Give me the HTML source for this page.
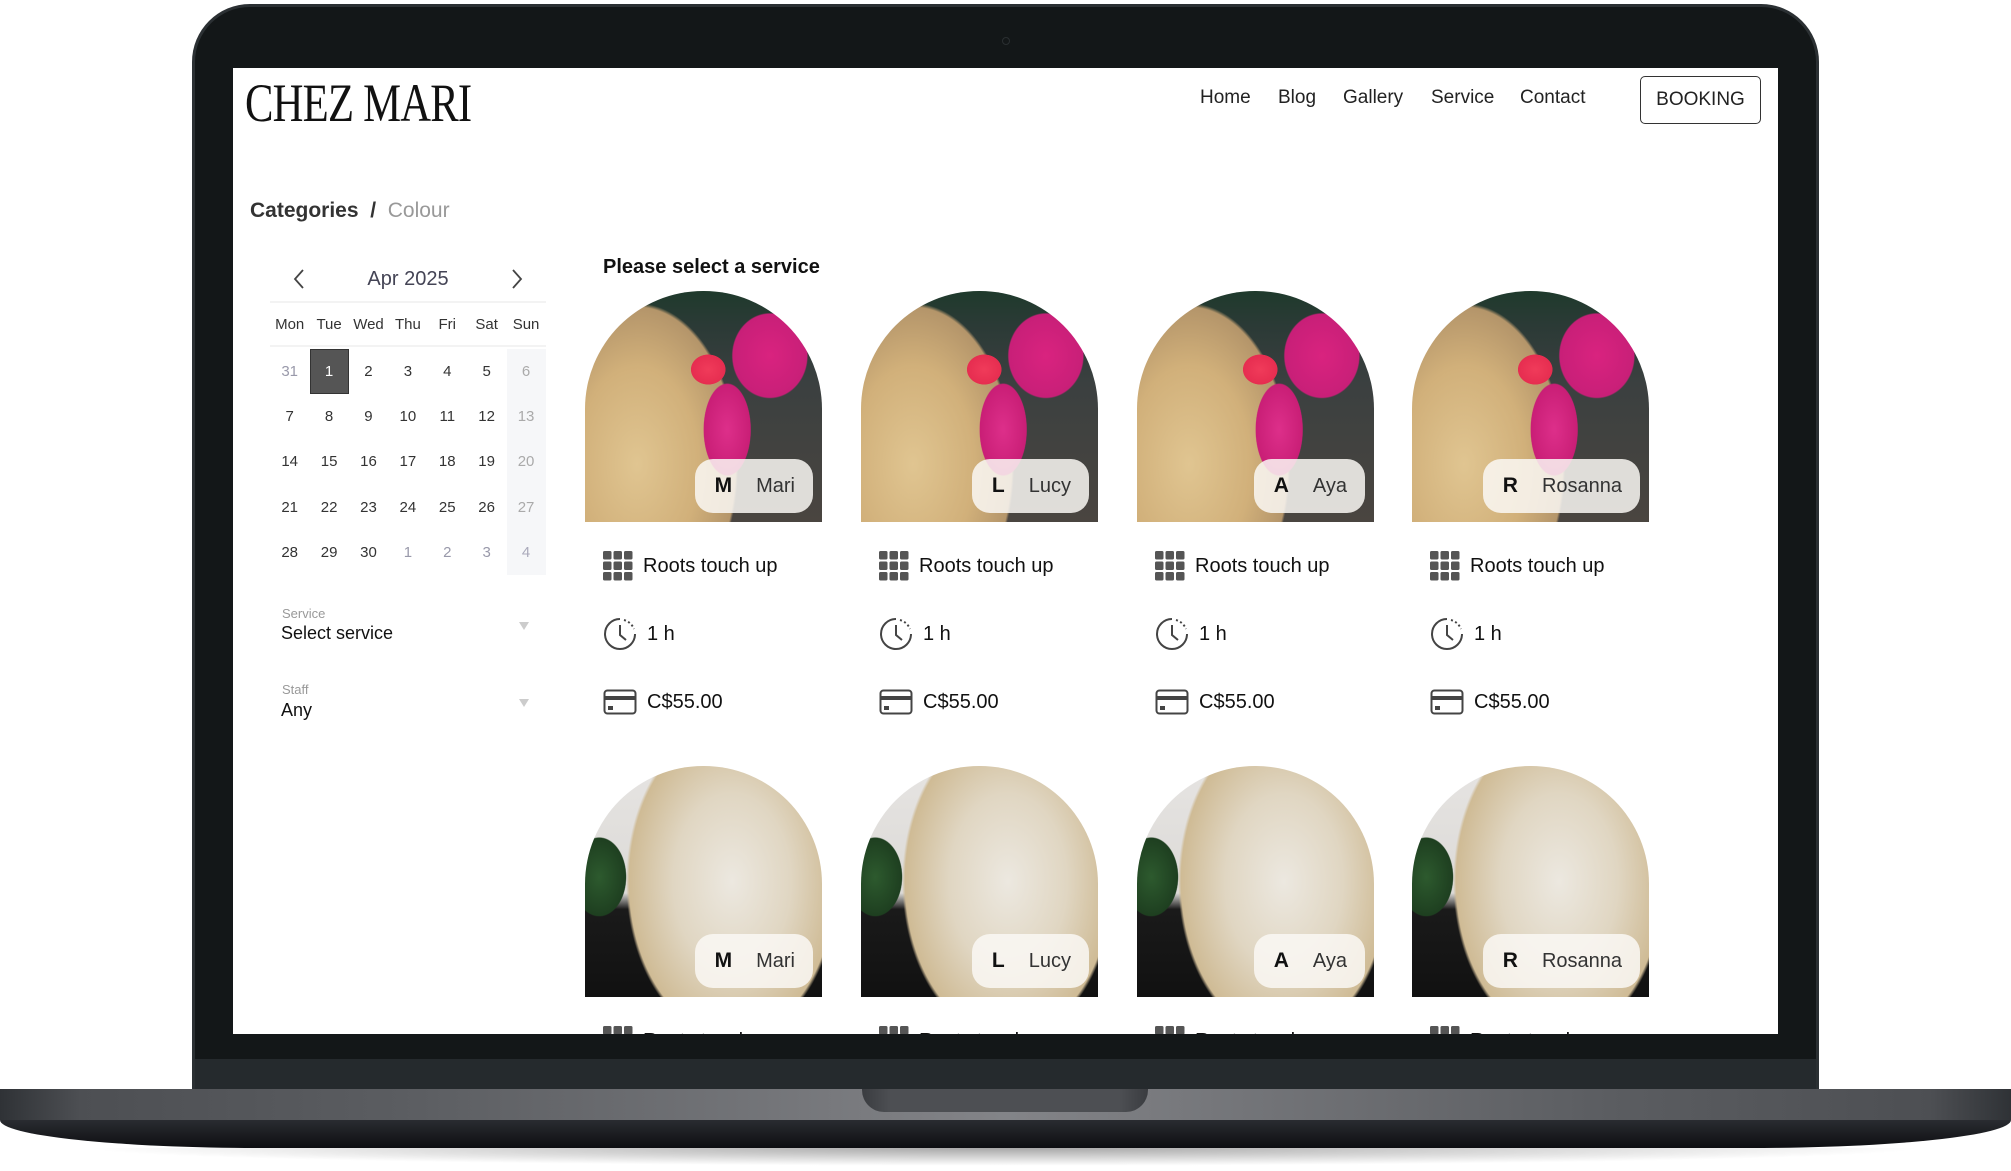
<!DOCTYPE html>
<html><head><meta charset="utf-8">
<style>
*{margin:0;padding:0;box-sizing:border-box}
body{width:2011px;height:1171px;background:#fff;position:relative;overflow:hidden;font-family:"Liberation Sans",sans-serif;color:#222}
.abs{position:absolute}
.lid{left:192px;top:4px;width:1627px;height:1100px;background:#131718;border-radius:58px 58px 0 0;border:3px solid #2b3033;border-bottom:none}
.chin{left:195px;top:1059px;width:1621px;height:31px;background:#252a2d}
.screen{left:233px;top:68px;width:1545px;height:966px;background:#fff;overflow:hidden}
.base{left:0;top:1089px;width:2011px;height:31px;background:linear-gradient(90deg,#2f3236 0%,#4d4f53 4%,#5b5d61 20%,#838488 50%,#5b5d61 80%,#4d4f53 96%,#2f3236 100%)}
.base2{left:0;top:1120px;width:2011px;height:28px;background:linear-gradient(#2a2c31,#0d0e11);border-radius:0 0 260px 260px/0 0 28px 28px}
.notch{left:862px;top:1089px;width:286px;height:23px;background:linear-gradient(90deg,#3a3c40,#4d4f53 10%,#4d4f53 90%,#3a3c40);border-radius:0 0 22px 22px}
.shadow{left:80px;top:1148px;width:1850px;height:18px;background:radial-gradient(ellipse at 50% 0,rgba(0,0,0,.35),rgba(0,0,0,0) 70%)}
.logo{left:12px;top:4px;font-family:"Liberation Serif",serif;font-size:54px;color:#111;transform:scaleX(.79);transform-origin:0 0;letter-spacing:-1px;white-space:nowrap}
.nav{top:19px;font-size:19px;color:#222}
.btn{left:1407px;top:8px;width:121px;height:48px;border:1.5px solid #333;border-radius:5px;font-size:19px;text-align:center;line-height:45px;color:#222}
.crumb{left:17px;top:131px;font-size:21px;font-weight:bold;color:#333}
.crumb span{color:#999;font-weight:normal}
.cal{left:37px;top:196px;width:276px}
.calhead{position:absolute;top:0;left:0;width:276px;text-align:center;font-size:20px;color:#445;line-height:30px}
.row{position:absolute;left:0;width:276px;display:flex}
.row div{width:39.4px;text-align:center;font-size:15px;color:#333}
.pse{left:370px;top:188px;font-size:20px;font-weight:bold;color:#111}
.card{position:absolute;width:237px;height:300px}
.img{position:absolute;left:0;top:0;width:237px;height:231px;border-radius:118px 118px 0 0;overflow:hidden}
.pill{position:absolute;right:9px;bottom:9px;height:54px;padding:0 18px 0 20px;border-radius:18px;background:rgba(250,248,245,.85);display:flex;align-items:center;font-size:20px;color:#333;white-space:nowrap}
.pill b{margin-right:24px;font-size:21px;color:#111}
.line{position:absolute;left:18px;display:flex;align-items:center;font-size:20px;color:#111;white-space:nowrap}
.line svg{margin-right:10px}
</style></head><body>
<div class="abs shadow"></div>
<div class="abs lid"></div>
<div class="abs chin"></div>
<div class="abs base"></div>
<div class="abs base2"></div>
<div class="abs notch"></div>
<div class="abs" style="left:1002px;top:37px;width:8px;height:8px;border-radius:50%;border:1px solid #2a2f31"></div>
<div class="abs screen">
 <div class="abs logo">CHEZ MARI</div>
 <div class="abs nav" style="left:967px">Home</div>
 <div class="abs nav" style="left:1045px">Blog</div>
 <div class="abs nav" style="left:1110px">Gallery</div>
 <div class="abs nav" style="left:1198px">Service</div>
 <div class="abs nav" style="left:1287px">Contact</div>
 <div class="abs btn">BOOKING</div>
 <div class="abs crumb">Categories &nbsp;/&nbsp; <span>Colour</span></div>
 <div class="abs cal">
  <div class="calhead">Apr 2025</div>
  <svg class="abs" style="left:22px;top:4px" width="14" height="22"><path d="M11 2 L3 11 L11 20" fill="none" stroke="#444" stroke-width="1.8"/></svg>
  <svg class="abs" style="left:240px;top:4px" width="14" height="22"><path d="M3 2 L11 11 L3 20" fill="none" stroke="#444" stroke-width="1.8"/></svg>
  <div class="abs" style="left:0;top:37px;width:276px;height:2px;background:#f3f3f3"></div>
  <div class="abs" style="left:0;top:81px;width:276px;height:2px;background:#f3f3f3"></div>
  <div class="abs" style="left:237px;top:85px;width:39px;height:226px;background:#f6f7f9"></div>
  <div class="abs" style="left:40px;top:85px;width:39px;height:45px;background:#555;border:1px solid #333"></div>
  <div class="row" style="top:52px"><div>Mon</div><div>Tue</div><div>Wed</div><div>Thu</div><div>Fri</div><div>Sat</div><div>Sun</div></div>
  <div class="row" style="top:99px"><div style="color:#99a">31</div><div style="color:#fff">1</div><div>2</div><div>3</div><div>4</div><div>5</div><div style="color:#aaa">6</div></div>
  <div class="row" style="top:144px"><div>7</div><div>8</div><div>9</div><div>10</div><div>11</div><div>12</div><div style="color:#aaa">13</div></div>
  <div class="row" style="top:189px"><div>14</div><div>15</div><div>16</div><div>17</div><div>18</div><div>19</div><div style="color:#aaa">20</div></div>
  <div class="row" style="top:235px"><div>21</div><div>22</div><div>23</div><div>24</div><div>25</div><div>26</div><div style="color:#aaa">27</div></div>
  <div class="row" style="top:280px"><div>28</div><div>29</div><div>30</div><div style="color:#99a">1</div><div style="color:#99a">2</div><div style="color:#99a">3</div><div style="color:#aab">4</div></div>
 </div>
 <div class="abs" style="left:49px;top:538px;font-size:13px;color:#999">Service</div>
 <div class="abs" style="left:48px;top:555px;font-size:18px;color:#111">Select service</div>
 <div class="abs" style="left:286px;top:554px;width:0;height:0;border-left:5px solid transparent;border-right:5px solid transparent;border-top:8px solid #ccc"></div>
 <div class="abs" style="left:49px;top:614px;font-size:13px;color:#999">Staff</div>
 <div class="abs" style="left:48px;top:632px;font-size:18px;color:#111">Any</div>
 <div class="abs" style="left:286px;top:631px;width:0;height:0;border-left:5px solid transparent;border-right:5px solid transparent;border-top:8px solid #ccc"></div>
 <div class="abs pse">Please select a service</div>
 <div id="cards"></div>
</div>
<script>
(function(){
var names=[["M","Mari"],["L","Lucy"],["A","Aya"],["R","Rosanna"]];
var xs=[352,628,904,1179];
var img1="background:radial-gradient(ellipse 26% 30% at 78% 28%,#d9237f 0%,#c81f78 60%,rgba(0,0,0,0) 62%),radial-gradient(ellipse 14% 28% at 60% 60%,#dd2f8a 0%,#c91e76 70%,rgba(0,0,0,0) 72%),radial-gradient(ellipse 9% 8% at 52% 34%,#f03b5a 0%,#e62d50 80%,rgba(0,0,0,0) 82%),radial-gradient(ellipse 52% 85% at 22% 75%,#e0c591 0%,#d1b07a 50%,#b4956a 80%,rgba(0,0,0,0) 82%),linear-gradient(180deg,#1f3a2c 0%,#2b3a36 15%,#3b4040 40%,#4a4540 100%)";
var img2="background:radial-gradient(ellipse 62% 95% at 62% 50%,#ece8e0 0%,#e0d6c2 40%,#cfbb95 70%,rgba(0,0,0,0) 72%),radial-gradient(ellipse 16% 24% at 6% 48%,#2d5a2e 0%,#1e3f20 70%,rgba(0,0,0,0) 72%),linear-gradient(180deg,#e6e4e2 0%,#dcdad7 55%,#1a1a1a 62%,#111 100%)";
function grid(){var s='<svg width="30" height="30" viewBox="0 0 30 30">';for(var r=0;r<3;r++)for(var c=0;c<3;c++)s+='<rect x="'+(c*10.5)+'" y="'+(r*10.5)+'" width="8.5" height="8.5" rx="1.5" fill="#555"/>';return s+'</svg>';}
var clock='<svg width="34" height="34" viewBox="0 0 34 34"><path d="M17 2 A15 15 0 1 0 32 17" fill="none" stroke="#444" stroke-width="2"/><path d="M21 3 A15 15 0 0 1 31 12" fill="none" stroke="#444" stroke-width="2" stroke-dasharray="2 2.5"/><path d="M17 8 V18 L23 23" fill="none" stroke="#444" stroke-width="2"/></svg>';
var cardi='<svg width="34" height="26" viewBox="0 0 34 26"><rect x="1.5" y="1.5" width="31" height="23" rx="3" fill="none" stroke="#444" stroke-width="2"/><rect x="1.5" y="7" width="31" height="4" fill="#444"/><rect x="5" y="17" width="5" height="4" fill="#444"/></svg>';
var h='';
for(var rw=0;rw<2;rw++){for(var i=0;i<4;i++){
 var tp=rw?698:223;
 h+='<div class="card" style="left:'+xs[i]+'px;top:'+tp+'px"><div class="img" style="'+(rw?img2:img1)+'"><div class="pill"><b>'+names[i][0]+'</b>'+names[i][1]+'</div></div>';
 h+='<div class="line" style="top:260px">'+grid()+'<span>Roots touch up</span></div>';
 if(!rw){h+='<div class="line" style="top:326px">'+clock+'<span>1 h</span></div>';
 h+='<div class="line" style="top:398px">'+cardi+'<span>C$55.00</span></div>';}
 h+='</div>';
}}
document.getElementById('cards').innerHTML=h;
})();
</script>
</body></html>
